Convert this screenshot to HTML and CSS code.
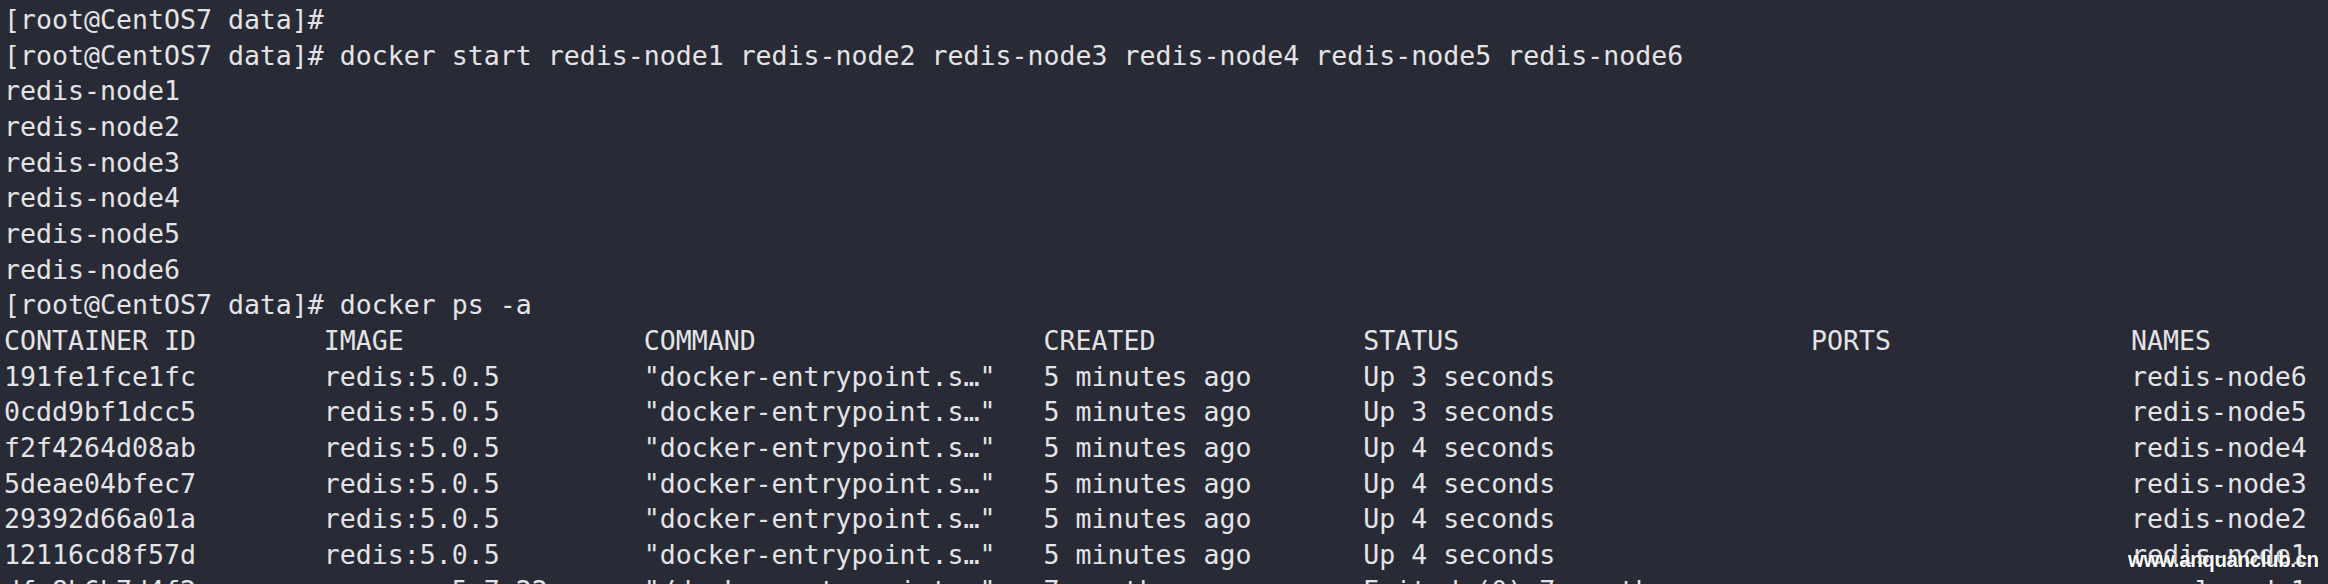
FILE: index.html
```html
<!DOCTYPE html>
<html lang="en">
<head>
<meta charset="utf-8">
<title>Terminal</title>
<link rel="stylesheet" href="styles.css">
</head>
<body>
<main class="screen">
<pre class="term">[root@CentOS7 data]#
[root@CentOS7 data]# docker start redis-node1 redis-node2 redis-node3 redis-node4 redis-node5 redis-node6
redis-node1
redis-node2
redis-node3
redis-node4
redis-node5
redis-node6
[root@CentOS7 data]# docker ps -a
CONTAINER ID        IMAGE               COMMAND                  CREATED             STATUS                      PORTS               NAMES
191fe1fce1fc        redis:5.0.5         "docker-entrypoint.s…"   5 minutes ago       Up 3 seconds                                    redis-node6
0cdd9bf1dcc5        redis:5.0.5         "docker-entrypoint.s…"   5 minutes ago       Up 3 seconds                                    redis-node5
f2f4264d08ab        redis:5.0.5         "docker-entrypoint.s…"   5 minutes ago       Up 4 seconds                                    redis-node4
5deae04bfec7        redis:5.0.5         "docker-entrypoint.s…"   5 minutes ago       Up 4 seconds                                    redis-node3
29392d66a01a        redis:5.0.5         "docker-entrypoint.s…"   5 minutes ago       Up 4 seconds                                    redis-node2
12116cd8f57d        redis:5.0.5         "docker-entrypoint.s…"   5 minutes ago       Up 4 seconds                                    redis-node1
dfa8b6b7d4f2        percona:5.7.22      "/docker-entrypoint.…"   7 months ago        Exited (0) 7 months ago                         mysql-node1</pre>
<div class="watermark">www.anquanclub.cn</div>
</main>
</body>
</html>
```

FILE: styles.css
```css
html, body {
  margin: 0;
  padding: 0;
  background: #282a36;
  overflow: hidden;
}

.screen {
  position: relative;
  width: 2328px;
  height: 584px;
  overflow: hidden;
  background: #282a36;
}

.term {
  margin: 0;
  padding: 2px 0 0 4px;
  font-family: "DejaVu Sans Mono", "Liberation Mono", monospace;
  font-size: 26.57px;
  line-height: 35.67px;
  color: #e4e4e6;
  white-space: pre;
}

.watermark {
  position: absolute;
  left: 2128px;
  top: 547px;
  font-family: "Liberation Sans", Arial, sans-serif;
  font-weight: bold;
  font-size: 22px;
  line-height: 26px;
  color: #ffffff;
  letter-spacing: -0.4px;
  transform: scaleX(0.93);
  transform-origin: left center;
  text-shadow: 0 0 2px rgba(0, 0, 0, 0.6);
}
```
